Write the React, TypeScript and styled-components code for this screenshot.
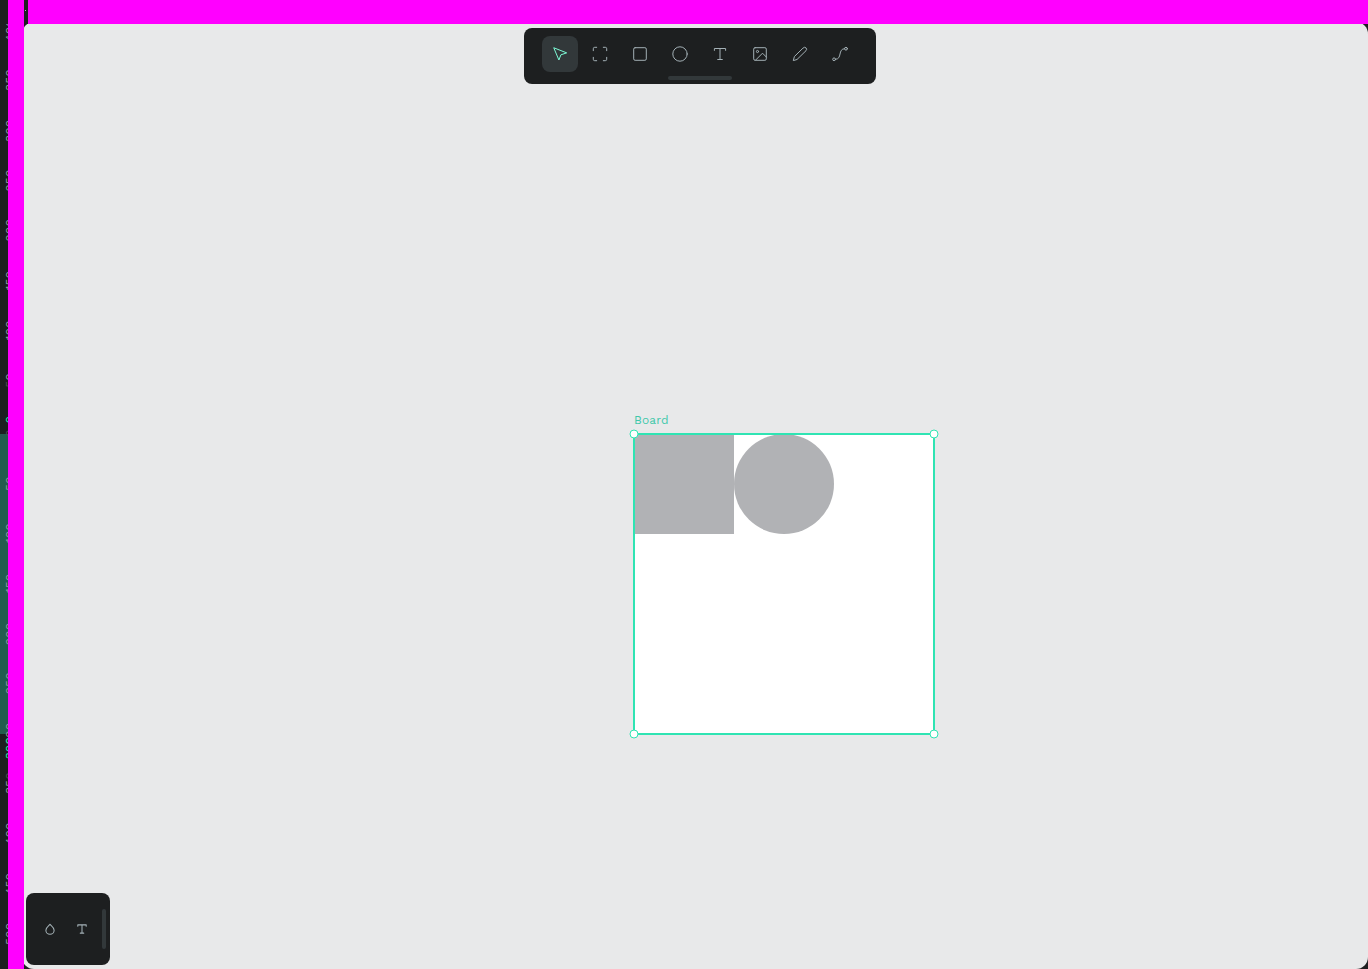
import React from "react";
import styled, { createGlobalStyle, css } from "styled-components";

const Global = createGlobalStyle`
  * { box-sizing: border-box; }
  body { margin: 0; background: #1d1f20; font-family: "Work Sans", "DejaVu Sans", sans-serif; }
`;

const Workspace = styled.div`
  display: flex;
  width: 1368px;
  height: 969px;
  overflow: hidden;
  background: #1d1f20;
`;

const Ruler = styled.div`
  position: relative;
  width: 8px;
  height: 945px;
  margin-top: 24px;
  overflow: hidden;
`;
const RulerRange = styled.div`
  position: absolute;
  left: 0;
  top: 410px;
  width: 8px;
  height: 300px;
  background: #235c4e;
`;
const Scale = styled.div`
  position: relative;
  display: flex;
  flex-direction: column;
  width: 24px;
  margin-top: -15px;
`;
const vertical = css`
  writing-mode: vertical-rl;
  transform: rotate(180deg);
  font: 12px/14px "Work Sans", "Liberation Sans", sans-serif;
  letter-spacing: 0.1px;
`;
const Tick = styled.div`
  ${vertical}
  display: flex;
  align-items: center;
  justify-content: center;
  width: 14px;
  height: 50px;
  flex: none;
  margin-left: 3px;
  padding-top: 1px;
  color: #8f9da3;
`;
const Dim = styled.span`
  color: #4d5354;
`;
const RangeLabel = styled.div<{ $top: number }>`
  ${vertical}
  position: absolute;
  left: 3px;
  top: ${(p) => p.$top}px;
  width: 14px;
  color: #2fe4b3;
`;

const SideMask = styled.div`
  width: 16px;
  background: #ff00ff;
`;
const Main = styled.div`
  flex: 1;
  display: flex;
  flex-direction: column;
  min-width: 0;
`;
const TopRow = styled.div`
  display: flex;
  height: 24px;
  padding-left: 4px;
  position: relative;
`;
const TopMask = styled.div`
  flex: 1;
  background: #ff00ff;
`;
const Speck = styled.div`
  position: absolute;
  left: 1px;
  top: 10px;
  width: 1px;
  height: 1px;
  background: #b5bec2;
`;
const Viewport = styled.div`
  position: relative;
  flex: 1;
  overflow: hidden;
  display: flex;
`;
const Surface = styled.div`
  flex: 1;
  margin: -2px 0 0 -2px;
  border-radius: 12px;
  background: #e8e9ea;
`;

const Toolbar = styled.div`
  position: absolute;
  left: 500px;
  top: 4px;
  width: 352px;
  height: 56px;
  padding: 8px 18px 4px;
  display: flex;
  flex-direction: column;
  align-items: center;
  justify-content: space-between;
  border-radius: 8px;
  background: #1d1f20;
`;
const Tools = styled.div`
  display: flex;
  gap: 4px;
`;
const ToolButton = styled.button<{ $active?: boolean }>`
  display: flex;
  align-items: center;
  justify-content: center;
  width: 36px;
  height: 36px;
  padding: 0;
  border: 0;
  border-radius: 8px;
  background: ${(p) => (p.$active ? "#32383a" : "transparent")};
  color: ${(p) => (p.$active ? "#7dfbd6" : "#a3b0b5")};
`;
const Grip = styled.div<{ $vertical?: boolean }>`
  width: ${(p) => (p.$vertical ? 4 : 64)}px;
  height: ${(p) => (p.$vertical ? 40 : 4)}px;
  border-radius: 2px;
  background: #32383a;
`;
const Palette = styled.div`
  position: absolute;
  left: 2px;
  bottom: 4px;
  width: 84px;
  height: 72px;
  padding: 0 4px 0 8px;
  display: flex;
  align-items: center;
  border-radius: 8px;
  background: #1d1f20;
`;
const PaletteButton = styled.button`
  display: flex;
  align-items: center;
  justify-content: center;
  width: 32px;
  height: 32px;
  padding: 0;
  border: 0;
  background: transparent;
  color: #a3b0b5;
  & + ${Grip} { margin-left: auto; }
`;

const Board = styled.div`
  position: absolute;
  left: 610px;
  top: 410px;
  width: 300px;
  height: 300px;
  display: flex;
  align-items: flex-start;
  background: #fff;
`;
const BoardName = styled.div`
  position: absolute;
  left: 0;
  top: -21px;
  font: 12px/14px "Work Sans", "DejaVu Sans", sans-serif;
  letter-spacing: 0.1px;
  color: #3fc8aa;
`;
const Shape = styled.div<{ $round?: boolean }>`
  width: 100px;
  height: 100px;
  border-radius: ${(p) => (p.$round ? "50%" : "0")};
  background: #b1b2b5;
`;
const Selection = styled.svg`
  position: absolute;
  left: -6px;
  top: -6px;
  width: 312px;
  height: 312px;
`;

const Icon = ({ children, size = 16, weight = 1 }: { children: React.ReactNode; size?: number; weight?: number }) => (
  <svg width={size} height={size} viewBox="0 0 16 16" fill="none" stroke="currentColor" strokeWidth={weight} strokeLinecap="round" strokeLinejoin="round">
    {children}
  </svg>
);

const serifT = <path d="M2.4 4.4V2.500h11.200v1.900M8 2.500v11M5.700 13.500h4.600" />;

const tools: { name: string; art: React.ReactNode }[] = [
  { name: "Move", art: <path d="M1.9 2.1l5 11.900 2-5.200L14.300 7z" /> },
  { name: "Board", art: <path d="M1.3 4.7V2.700q0-1.400 1.400-1.400h2M11.300 1.300h2q1.400 0 1.400 1.400v2M14.700 11.300v2q0 1.400-1.400 1.400h-2M4.700 14.700h-2q-1.400 0-1.400-1.400v-2" /> },
  { name: "Rectangle", art: <rect x="1.7" y="1.7" width="12.600" height="12.600" rx="1.400" /> },
  { name: "Ellipse", art: <circle cx="8" cy="8" r="7.200" /> },
  { name: "Text", art: serifT },
  {
    name: "Image",
    art: (
      <>
        <rect x="1.7" y="1.7" width="12.600" height="12.600" rx="1.400" />
        <circle cx="5.500" cy="5.500" r="1.100" />
        <path d="M3.500 14.200L10.500 7.200l3.700 3.700" />
      </>
    ),
  },
  { name: "Path", art: <path d="M11.200 1.900a1.900 1.900 0 0 1 2.800 2.800L5 13.500l-3.700 1.100 1-3.700z" /> },
  {
    name: "Curve",
    art: (
      <>
        <circle cx="2.100" cy="13.300" r="1.400" />
        <circle cx="14" cy="2.700" r="1.400" />
        <path d="M3.600 13.300C10.500 13.300 5.500 2.700 12.600 2.700" />
      </>
    ),
  },
];

const ticks: React.ReactNode[] = [
  "-400", "-350", "-300", "-250", "-200", "-150", "-100",
  <>-<Dim>5</Dim>0</>,
  <Dim>0</Dim>,
  "50", "100", "150", "200", "250",
  <><Dim>3</Dim>00</>,
  <>35<Dim>0</Dim></>,
  "400", "450", "500",
];

export default function App() {
  return (
    <Workspace>
      <Global />
      <Ruler>
        <RulerRange />
        <Scale>
          {ticks.map((t, i) => (
            <Tick key={i}><span>{t}</span></Tick>
          ))}
        </Scale>
        <RangeLabel $top={392}>0</RangeLabel>
        <RangeLabel $top={713}>300</RangeLabel>
      </Ruler>
      <SideMask />
      <Main>
        <TopRow>
          <Speck />
          <TopMask />
        </TopRow>
        <Viewport>
          <Surface />
          <Board>
            <BoardName>Board</BoardName>
            <Shape />
            <Shape $round />
            <Selection viewBox="-6 -6 312 312" fill="none" stroke="#2fe4b3">
              <rect width="300" height="300" strokeWidth="2" />
              {[0, 300].map((x) =>
                [0, 300].map((y) => <circle key={`${x}-${y}`} cx={x} cy={y} r="4" fill="#fff" />)
              )}
            </Selection>
          </Board>
          <Toolbar>
            <Tools>
              {tools.map((t, i) => (
                <ToolButton key={t.name} $active={i === 0} aria-label={t.name}>
                  <Icon>{t.art}</Icon>
                </ToolButton>
              ))}
            </Tools>
            <Grip />
          </Toolbar>
          <Palette>
            <PaletteButton aria-label="Colors">
              <Icon size={12} weight={1.4}>
                <path d="M8 1.600C6.600 3.800 2.500 5.600 2.500 9.500a5.500 5.500 0 0 0 11 0C13.500 5.600 9.400 3.800 8 1.600z" />
              </Icon>
            </PaletteButton>
            <PaletteButton aria-label="Typographies">
              <Icon size={12} weight={1.4}>{serifT}</Icon>
            </PaletteButton>
            <Grip $vertical />
          </Palette>
        </Viewport>
      </Main>
    </Workspace>
  );
}
